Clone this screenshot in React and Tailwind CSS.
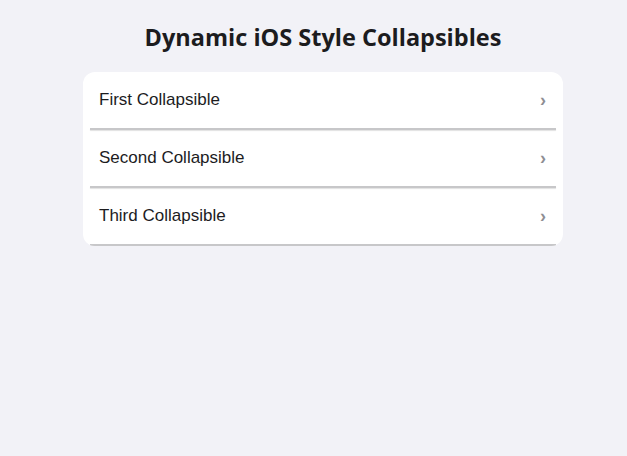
import React, { useState } from 'react'

const ITEMS = ['First Collapsible', 'Second Collapsible', 'Third Collapsible']

function Row({ title, open, onToggle }) {
  return (
    <div className="relative">
      <button
        onClick={onToggle}
        className="flex h-[58px] w-full items-center justify-between pb-[2px] pl-4 pr-[17px] text-left"
      >
        <span className="text-[17px] text-[#1c1c1e]" style={{ fontFamily: '"Liberation Sans", Arial, sans-serif' }}>
          {title}
        </span>
        <span
          className={`text-[18px] font-bold leading-none text-[#8e8e93] transition-transform ${open ? 'rotate-90' : ''}`}
          style={{ fontFamily: '"Liberation Sans", Arial, sans-serif' }}
        >
          ›
        </span>
      </button>
      {/* separator drawn like a soft shadow */}
      <div className="absolute bottom-0 left-[7px] right-[7px] h-[2px] bg-[#c7c7c9] shadow-[0_1px_1px_rgba(0,0,0,0.12)]" />
    </div>
  )
}

export default function App() {
  const [openIdx, setOpenIdx] = useState(-1)

  return (
    <div className="min-h-[456px] bg-[#f2f2f7] pl-[19px] pt-[19px]">
      <h1
        className="text-center text-[23.5px] font-bold leading-[36px] text-[#1c1c1e]"
        style={{ fontFamily: '"Open Sans", "DejaVu Sans", sans-serif' }}
      >
        Dynamic iOS Style Collapsibles
      </h1>
      <div className="mx-auto mt-[17px] w-[480px] overflow-hidden rounded-[12px] bg-white">
        {ITEMS.map((t, i) => (
          <Row key={t} title={t} open={openIdx === i} onToggle={() => setOpenIdx(openIdx === i ? -1 : i)} />
        ))}
      </div>
    </div>
  )
}
